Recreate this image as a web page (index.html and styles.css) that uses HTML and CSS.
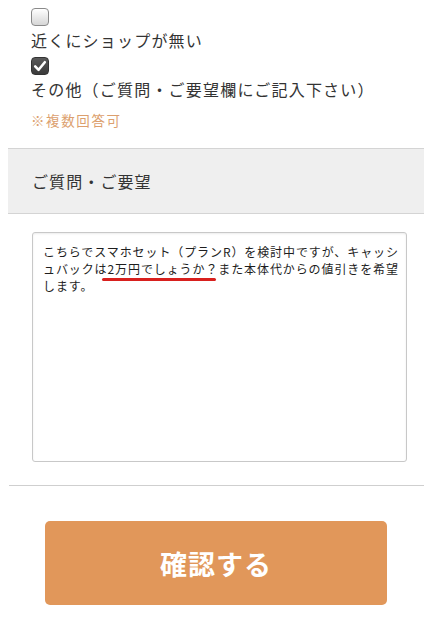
FILE: index.html
```html
<!DOCTYPE html>
<html lang="ja">
<head>
<meta charset="utf-8">
<link rel="stylesheet" href="styles.css">
</head>
<body>
<div class="page">
  <div class="options">
    <div class="option">
      <span class="cb"></span>
      <div class="label">近くにショップが無い</div>
    </div>
    <div class="option">
      <span class="cb checked">
        <svg viewBox="0 0 18 18" width="18" height="18"><path d="M4.2 9.4 L7.6 12.8 L13.8 5.2" fill="none" stroke="#fff" stroke-width="2.6" stroke-linecap="round" stroke-linejoin="round"/></svg>
      </span>
      <div class="label">その他（ご質問・ご要望欄にご記入下さい）</div>
    </div>
    <div class="note">※複数回答可</div>
  </div>

  <div class="band">ご質問・ご要望</div>

  <div class="textarea">こちらでスマホセット（プランR）を検討中ですが、キャッシ<br>ュバックは<span class="mark">2万円でしょうか？</span>また本体代からの値引きを希望<br>します。</div>

  <hr class="divider">

  <div class="actions">
    <button class="submit">確認する</button>
  </div>
</div>
</body>
</html>
```

FILE: styles.css
```css
* { box-sizing: border-box; }
html, body { margin: 0; padding: 0; background: #fff; }
body {
  font-family: "Noto Sans CJK JP", "Noto Sans", sans-serif;
  color: #333;
}
.page { padding: 0 8px; }

.options { padding: 8px 0 0 23px; }
.option { display: flex; flex-direction: column; align-items: flex-start; }
.option + .option { margin-top: 5px; }
.cb {
  width: 18px; height: 18px;
  border: 1px solid #8a8a8a;
  border-radius: 4px;
  background: linear-gradient(#ffffff, #d6d6d6);
  display: block;
}
.cb.checked {
  background: linear-gradient(#5a5a5a, #3a3a3a);
  border-color: #333;
}
.cb svg { display: block; margin: -1px; }
.label {
  font-size: 16px;
  letter-spacing: 1.2px;
  line-height: 24px;
  margin-top: 2px;
  color: #333;
  white-space: nowrap;
}
.note {
  margin-top: 9px;
  font-size: 13.5px;
  letter-spacing: 1.6px;
  line-height: 20px;
  color: #dc9f6e;
}

.band {
  margin-top: 18px;
  background: #efefef;
  border-top: 1px solid #d4d4d4;
  border-bottom: 1px solid #d4d4d4;
  height: 66px;
  padding-left: 24px;
  display: flex;
  align-items: center;
  font-size: 16px;
  letter-spacing: 1.1px;
  color: #333;
}

.textarea {
  margin: 18px 17px 0 24px;
  height: 230px;
  border: 1px solid #c8c8c8;
  border-radius: 3px;
  box-shadow: inset 0 1px 2px rgba(0,0,0,0.08);
  padding: 10px 0 0 10px;
  font-size: 12px;
  letter-spacing: 0.9px;
  line-height: 17px;
  color: #1e1e1e;
  white-space: nowrap;
}
.mark { position: relative; }
.mark::after {
  content: "";
  position: absolute;
  left: -6px; right: 2px;
  bottom: -4px;
  height: 3px;
  border-radius: 2px;
  background: #d8201e;
}

.divider {
  margin: 23px 0 0 1px;
  border: 0;
  border-top: 1px solid #cfcfcf;
  height: 0;
}

.actions { padding: 35px 0 0 37px; }
.submit {
  display: block;
  width: 342px;
  height: 84px;
  border: 0;
  border-radius: 5px;
  background: #e1975a;
  color: #fff;
  font-family: "Noto Sans CJK JP", sans-serif;
  font-weight: bold;
  font-size: 27px;
  letter-spacing: 1px;
}
```
